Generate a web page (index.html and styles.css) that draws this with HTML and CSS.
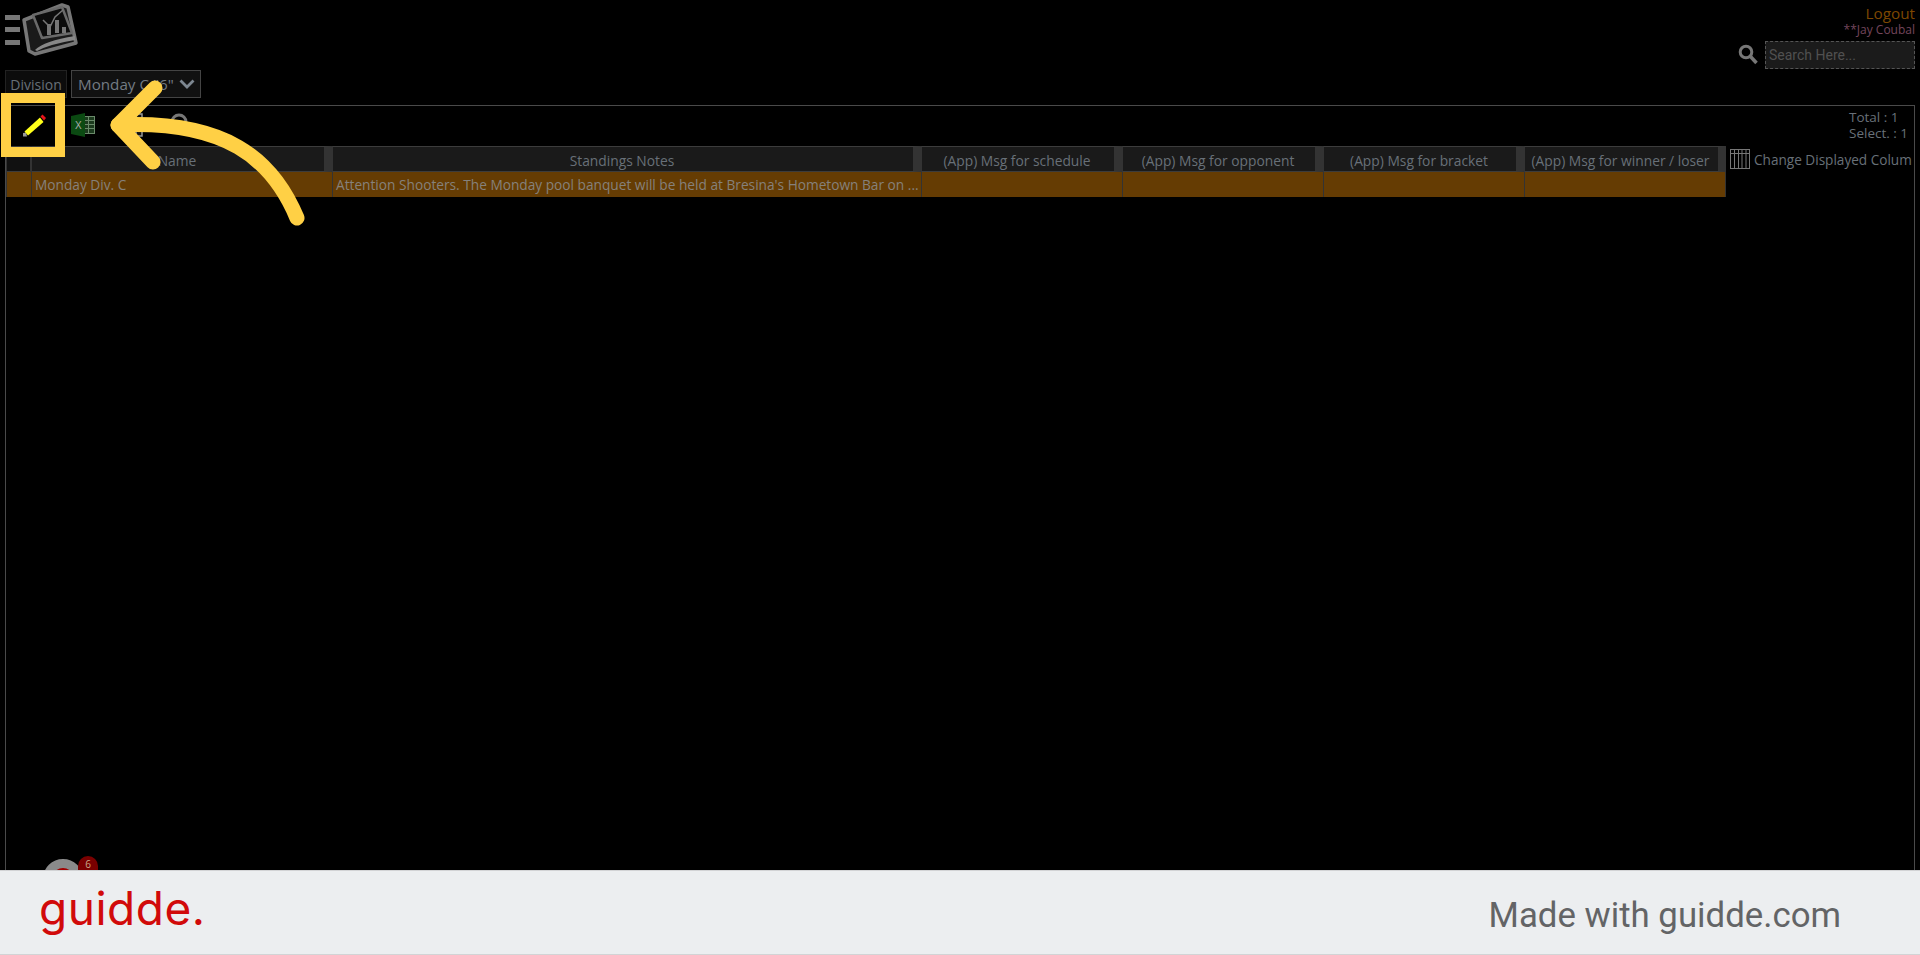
FILE: index.html
```html
<!DOCTYPE html>
<html lang="en">
<head>
<meta charset="utf-8">
<title>Standings Notes</title>
<link rel="stylesheet" href="styles.css">
</head>
<body>
<div class="page">
  <main class="app">
    <header class="topbar">
      <div class="top-left">
        <div class="brand">
          <svg class="logo" width="80" height="60" viewBox="0 0 80 60">
            <path d="M5 17.500H20M5 29.500H20M5 42.500H20" stroke="#777" stroke-width="5" fill="none"/>
            <path d="M24 20L62 5L68 7L76 43L35 54L29 51Z" fill="#1a1a1a" stroke="#777" stroke-width="3.500" stroke-linejoin="round"/>
            <path d="M33 15L62 7L72 33L42 38Z" fill="#0c0c0c" stroke="#6a6a6a" stroke-width="2.500" stroke-linejoin="round"/>
            <path d="M35 50Q44 41 75 36L75 40Q50 44 37 51Z" fill="#888"/>
            <path d="M43 20L50 27L55 17L63 10" fill="none" stroke="#777" stroke-width="1.500"/>
            <path d="M49 24V35M57 20V33M64 27V33" fill="none" stroke="#777" stroke-width="4"/>
          </svg>
        </div>
        <div class="division">
          <span class="division-label">Division</span>
          <div class="division-select">
            <span>Monday C "6"</span>
            <svg width="16" height="10" viewBox="0 0 16 10"><path d="M1.500 1.500L8 8L14.500 1.500" fill="none" stroke="#7d8791" stroke-width="2.800"/></svg>
          </div>
        </div>
      </div>
      <div class="top-right">
        <a class="logout">Logout</a>
        <span class="user">**Jay Coubal</span>
        <div class="search">
          <svg width="20" height="22" viewBox="0 0 20 22"><circle cx="8" cy="8" r="5.800" fill="none" stroke="#777" stroke-width="3"/><path d="M12.500 12.500L18.500 19" stroke="#777" stroke-width="3.500"/></svg>
          <input class="search-input" type="text" placeholder="Search Here...">
        </div>
      </div>
    </header>

    <section class="panel">
      <div class="toolbar">
        <div class="tools">
          <svg class="tool-icon" width="24" height="24" viewBox="0 0 24 24">
            <path d="M1 23.500V20L4 19.500L5 23.500Z" fill="#999"/>
            <path d="M2.500 18.500L18 4.500L21.500 9L6 22.500Z" fill="#ffff1a"/>
            <path d="M18.500 3.500L20.500 1.500L24 5L22 7.500Z" fill="#e8141a"/>
          </svg>
          <svg class="tool-icon" width="24" height="24" viewBox="0 0 24 24">
            <rect x="13" y="3" width="11" height="18" fill="#1c3a1e"/>
            <path d="M13 3.500H24M13 7.500H24M13 11.500H24M13 15.500H24M13 20.500H24M17.500 3V21M23.500 3V21" stroke="#6a8a6a" stroke-width="1" fill="none"/>
            <path d="M0 3L14 0V24L0 21Z" fill="#0b4a12"/>
            <text x="4" y="16" class="excel-x">X</text>
          </svg>
          <svg class="tool-icon tool-print" width="10" height="24" viewBox="0 0 10 24">
            <rect x="2" y="1" width="6" height="22" fill="#111" stroke="#999" stroke-width="1.500"/>
          </svg>
          <svg class="tool-icon" width="24" height="24" viewBox="0 0 24 24">
            <circle cx="10" cy="9" r="7" fill="none" stroke="#777" stroke-width="3"/>
            <path d="M15 14L21 22" stroke="#777" stroke-width="4"/>
          </svg>
        </div>
        <div class="totals">
          <div>Total : 1</div>
          <div>Select. : 1</div>
        </div>
      </div>

      <div class="grid-wrap">
        <div class="grid">
          <div class="head head-blank"></div>
          <div class="head"><span>Name</span></div>
          <div class="head"><span>Standings Notes</span></div>
          <div class="head"><span>(App) Msg for schedule</span></div>
          <div class="head"><span>(App) Msg for opponent</span></div>
          <div class="head"><span>(App) Msg for bracket</span></div>
          <div class="head"><span>(App) Msg for winner / loser</span></div>
          <div class="cell"></div>
          <div class="cell">Monday Div. C</div>
          <div class="cell">Attention Shooters. The Monday pool banquet will be held at Bresina's Hometown Bar on ...</div>
          <div class="cell"></div>
          <div class="cell"></div>
          <div class="cell"></div>
          <div class="cell"></div>
        </div>
        <div class="columns-toggle">
          <svg width="20" height="20" viewBox="0 0 20 20"><g fill="none" stroke="#777" stroke-width="1"><rect x="0.500" y="0.500" width="19" height="19"/><path d="M0 4.500H20M4.500 0V20M8.500 0V20M12 0V20M16 0V20"/></g></svg>
          <span class="columns-text">Change Displayed Colum</span>
        </div>
      </div>
    </section>

    <div class="chat">
      <span class="chat-ring"></span>
      <span class="chat-badge">6</span>
    </div>
  </main>

  <footer class="footer">
    <span class="footer-logo">guidde.</span>
    <span class="footer-text">Made with guidde.com</span>
  </footer>
</div>

<svg class="annotation" width="1920" height="955" viewBox="0 0 1920 955">
  <rect x="6" y="98" width="54" height="54" fill="none" stroke="#ffd045" stroke-width="10"/>
  <g fill="none" stroke="#ffd045" stroke-width="15" stroke-linecap="round" stroke-linejoin="round">
    <path d="M297 218C272 158 225 120 118 125"/>
    <path d="M155 88L118 125L153 162"/>
  </g>
</svg>
</body>
</html>
```
FILE: styles.css
```css
* { box-sizing: border-box; }
html, body { margin: 0; height: 100%; background: #000; overflow: hidden; }
body { font-family: "Open Sans", "Liberation Sans", sans-serif; position: relative; }

.page { display: flex; flex-direction: column; height: 955px; }
.app { flex: 1; min-height: 0; position: relative; overflow: hidden; padding: 0 5px; background: #000; }

.topbar { display: flex; justify-content: space-between; height: 105px; }
.top-left { display: flex; flex-direction: column; }
.brand { height: 70px; margin-left: -5px; }
.logo { display: block; }

.division { display: flex; gap: 4px; height: 28px; }
.division-label { width: 62px; background: #0c0c0c; border: 1px solid #222; color: #687078; font-size: 14px; line-height: 28px; text-align: center; }
.division-select { width: 130px; background: #111; border: 1px solid #444; color: #737b83; font-size: 15.200px; display: flex; align-items: center; justify-content: space-between; padding: 0 5px 0 6px; white-space: nowrap; }

.top-right { display: flex; flex-direction: column; align-items: flex-end; padding-top: 3px; }
.logout { color: #7d4700; font-size: 15.300px; line-height: 20px; }
.user { color: #74465c; font-size: 12px; line-height: 14px; }
.search { display: flex; align-items: center; gap: 7px; margin-top: 4px; }
.search-input { width: 150px; height: 28px; background: #1b1b1b; border: 1px dashed #555; color: #666; font-family: Roboto, sans-serif; font-size: 14px; padding: 0 3px; outline: none; }
.search-input::placeholder { color: #505050; opacity: 1; }

.panel { border: 1px solid #4a4a4a; height: 800px; }
.toolbar { display: flex; justify-content: space-between; height: 40px; }
.tools { display: flex; align-items: flex-start; padding: 7px 0 0 16px; gap: 25px; }
.tool-icon { display: block; }
.tool-print { margin-left: 14px; }
.excel-x { font-family: "Liberation Sans", sans-serif; font-size: 10px; fill: #aaa; }
.totals { width: 60px; font-size: 13.500px; line-height: 16px; color: #687078; padding-top: 3px; margin-right: 5px; white-space: nowrap; }

.grid-wrap { display: flex; align-items: flex-start; gap: 4px; }
.grid { display: grid; grid-template-columns: 25px 301px 589px repeat(3, 201px) 202px; width: 1720px; flex: none; }
.head { height: 26px; background: #1a1a1a; border-top: 1px solid #3c3c3c; border-bottom: 1px solid #3c3c3c; border-left: 1px solid #333; border-right: 8px solid #333; color: #687078; font-size: 13.800px; display: flex; align-items: center; justify-content: center; padding: 2px 2px 0 0; white-space: nowrap; overflow: hidden; }
.head-blank { border-right-width: 1px; background: #111; padding: 0; }
.cell { height: 25px; background: #653c03; border-left: 1px solid #333; color: #85817b; font-size: 13.700px; line-height: 26px; padding-left: 3px; white-space: nowrap; overflow: hidden; }
.cell:last-child { border-right: 1px solid #333; }

.columns-toggle { display: flex; align-items: center; gap: 4px; height: 26px; flex: 1; min-width: 0; overflow: hidden; }
.columns-toggle svg { flex: none; }
.columns-text { color: #687078; font-size: 13.600px; white-space: nowrap; }

.chat { position: absolute; left: 43px; top: 859px; width: 40px; height: 40px; }
.chat-ring { display: block; width: 40px; height: 40px; border: 9px solid #8a8a8a; border-radius: 50%; background: #a00000; }
.chat-badge { position: absolute; left: 35px; top: -3px; width: 20px; height: 14px; border-radius: 10px 10px 0 0; background: #7a0000; color: #c9a98a; font-size: 10px; line-height: 16px; text-align: center; }

.footer { height: 85px; flex: none; background: #eceef0; border-top: 1px solid #d2d3d5; border-bottom: 1px solid #d2d3d5; display: flex; align-items: center; justify-content: space-between; padding: 0 79px 0 39px; }
.footer-logo { font-family: Inter, sans-serif; font-size: 46px; font-weight: 400; letter-spacing: 0.500px; color: #d10a0a; line-height: 1; margin-top: -9px; }
.footer-text { font-family: Roboto, sans-serif; font-size: 34.800px; color: #636466; margin-top: 5px; }

.annotation { position: absolute; left: 0; top: 0; pointer-events: none; }
```
